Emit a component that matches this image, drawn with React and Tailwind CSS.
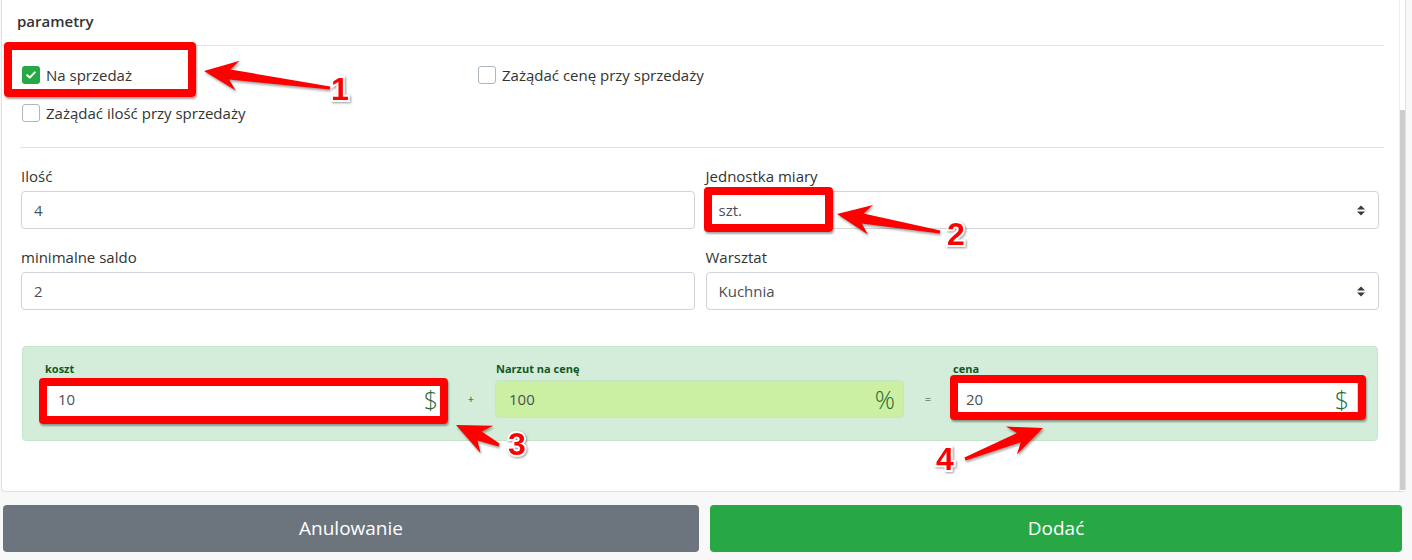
import React from "react";

function arrowPts(tip, tail, headLen = 30, headW = 15, neckW = 5, tailW = 1.5) {
  const dx = tail[0] - tip[0];
  const dy = tail[1] - tip[1];
  const len = Math.hypot(dx, dy);
  const ux = dx / len, uy = dy / len;
  const nx = -uy, ny = ux;
  const p = (a, w) => [tip[0] + ux * a + nx * w, tip[1] + uy * a + ny * w];
  const pts = [
    tip,
    p(headLen + 4, headW),
    p(headLen - 4, neckW),
    p(len, tailW),
    p(len, -tailW),
    p(headLen - 4, -neckW),
    p(headLen + 4, -headW),
  ];
  return pts.map((q) => q[0].toFixed(1) + "," + q[1].toFixed(1)).join(" ");
}

const arrows = [
  { tip: [204, 71], tail: [330, 88] },
  { tip: [837, 214], tail: [940, 232] },
  { tip: [456, 425], tail: [499, 445] },
  { tip: [1043, 428], tail: [965, 459] },
];

function Checkbox({ checked, label }) {
  return (
    <div className="flex items-center h-[22px]">
      {checked ? (
        <span className="w-[18px] h-[18px] rounded-[3px] bg-[#28a745] flex items-center justify-center">
          <svg width="10" height="8" viewBox="0 0 10 8">
            <path d="M1.2 4.2 L3.8 6.6 L8.8 1.4" fill="none" stroke="white" strokeWidth="2" strokeLinecap="round" strokeLinejoin="round" />
          </svg>
        </span>
      ) : (
        <span className="w-[18px] h-[18px] rounded-[3px] border border-[#adb5bd] bg-white" />
      )}
      <span className="ml-[6px] text-[15px] text-[#333]">{label}</span>
    </div>
  );
}

function Field({ label, value, select }) {
  return (
    <div className="flex flex-col">
      <div className="text-[15px] leading-[22px] text-[#333] mb-[4px]">{label}</div>
      <div className="h-[38px] border border-[#ced4da] rounded-[4px] bg-white flex items-center justify-between pl-[12px] pr-[13px] text-[15px] text-[#495057]">
        <span>{value}</span>
        {select && (
          <svg width="8" height="11" viewBox="0 0 8 11">
            <path d="M0 4.5 L4 0.5 L8 4.5 Z" fill="#343a40" />
            <path d="M0 6.5 L4 10.5 L8 6.5 Z" fill="#343a40" />
          </svg>
        )}
      </div>
    </div>
  );
}

function PriceField({ label, value, unit, lime }) {
  return (
    <div className="flex flex-col">
      <div className="text-[11px] font-bold leading-[14px] text-[#155724] mb-[4px] pl-[1px]">{label}</div>
      <div
        className={
          "h-[38px] border rounded-[4px] flex items-center justify-between pl-[13px] pr-[8px] text-[15px] text-[#495057] " +
          (lime ? "bg-[#ccf0a2] border-[#c3e6cb]" : "bg-white border-[#ced4da]")
        }
      >
        <span>{value}</span>
        <span className="text-[25px] font-light text-[#2a6a3a] leading-none">{unit}</span>
      </div>
    </div>
  );
}

export default function App() {
  return (
    <div className="relative w-[1412px] h-[560px] overflow-hidden bg-[#f8f8f8] font-['Open_Sans',sans-serif]">
      {/* card */}
      <div className="ml-[1px] w-[1405px] h-[492px] bg-white border-l border-r border-b border-[#dee2e6] rounded-b-[4px] flex">
        <div className="flex-1 flex flex-col">
          {/* header */}
          <div className="h-[46px] mr-[15px] border-b border-[#dee2e6] pl-[15px] flex items-center">
            <span className="text-[15px] font-semibold text-[#333] mt-[-2px]">parametry</span>
          </div>
          {/* checkboxes */}
          <div className="pl-[20px] pt-[18px] grid grid-cols-[456px_1fr] gap-y-[16px]">
            <Checkbox checked label="Na sprzedaż" />
            <Checkbox label="Zażądać cenę przy sprzedaży" />
            <Checkbox label="Zażądać ilość przy sprzedaży" />
          </div>
          <div className="mt-[23px] ml-[18px] mr-[15px] border-t border-[#dee2e6]" />
          {/* form */}
          <div className="ml-[19px] mr-[20px] pt-[17px] grid grid-cols-2 gap-x-[11px] gap-y-[17px]">
            <Field label="Ilość" value="4" />
            <Field label="Jednostka miary" value="szt." select />
            <Field label="minimalne saldo" value="2" />
            <Field label="Warsztat" value="Kuchnia" select />
          </div>
          {/* price panel */}
          <div className="mt-[36px] ml-[20px] mr-[21px] bg-[#d4edda] border border-[#c3e6cb] rounded-[4px] pl-[21px] pr-[19px] pt-[15px] pb-[22px] grid grid-cols-[403px_48px_409px_48px_1fr] items-end content-start">
            <PriceField label="koszt" value="10" unit="$" />
            <div className="h-[38px] flex items-center justify-center text-[11px] text-[#155724]">+</div>
            <PriceField label="Narzut na cenę" value="100" unit="%" lime />
            <div className="h-[38px] flex items-center justify-center text-[11px] text-[#155724]">=</div>
            <PriceField label="cena" value="20" unit="$" />
          </div>
        </div>
        {/* scrollbar */}
        <div className="w-[6px] bg-white border-l border-[#ececec] flex flex-col">
          <div className="mt-[110px] h-[380px] bg-[#cdcdcd]" />
        </div>
      </div>

      {/* buttons */}
      <div className="flex gap-[11px] pl-[3px] mt-[13px]">
        <button className="w-[696px] h-[47px] rounded-[4px] bg-[#6c757d] text-white text-[19px]">Anulowanie</button>
        <button className="w-[692px] h-[47px] rounded-[4px] bg-[#28a745] text-white text-[19px]">Dodać</button>
      </div>

      {/* annotations */}
      <div className="absolute left-[4px] top-[42px] w-[192px] h-[55px] border-[8px] border-[#ff0000] rounded-[4px] shadow-[1px_2px_2px_rgba(0,0,0,0.35)] pointer-events-none" />
      <div className="absolute left-[704px] top-[187px] w-[129px] h-[45px] border-[8px] border-[#ff0000] rounded-[4px] shadow-[1px_2px_2px_rgba(0,0,0,0.35)] pointer-events-none" />
      <div className="absolute left-[39px] top-[378px] w-[409px] h-[46px] border-[8px] border-[#ff0000] rounded-[4px] shadow-[1px_2px_2px_rgba(0,0,0,0.35)] pointer-events-none" />
      <div className="absolute left-[950px] top-[375px] w-[416px] h-[45px] border-[8px] border-[#ff0000] rounded-[4px] shadow-[1px_2px_2px_rgba(0,0,0,0.35)] pointer-events-none" />

      <svg className="absolute left-0 top-0 pointer-events-none drop-shadow-[1px_2px_1px_rgba(0,0,0,0.35)]" width="1412" height="560">
        {arrows.map((a, i) => (
          <polygon key={i} points={arrowPts(a.tip, a.tail)} fill="#ff0000" />
        ))}
      </svg>

      {[
        ["1", "left-[331px] top-[73px]"],
        ["2", "left-[947px] top-[218px]"],
        ["3", "left-[508px] top-[428px]"],
        ["4", "left-[936px] top-[443px]"],
      ].map(([n, pos]) => (
        <span
          key={n}
          className={
            "absolute leading-none text-[32px] font-bold text-[#ff0000] font-['Liberation_Sans',sans-serif] [paint-order:stroke_fill] [-webkit-text-stroke:4px_white] drop-shadow-[1px_1px_1px_rgba(0,0,0,0.4)] pointer-events-none " +
            pos
          }
        >
          {n}
        </span>
      ))}
    </div>
  );
}
